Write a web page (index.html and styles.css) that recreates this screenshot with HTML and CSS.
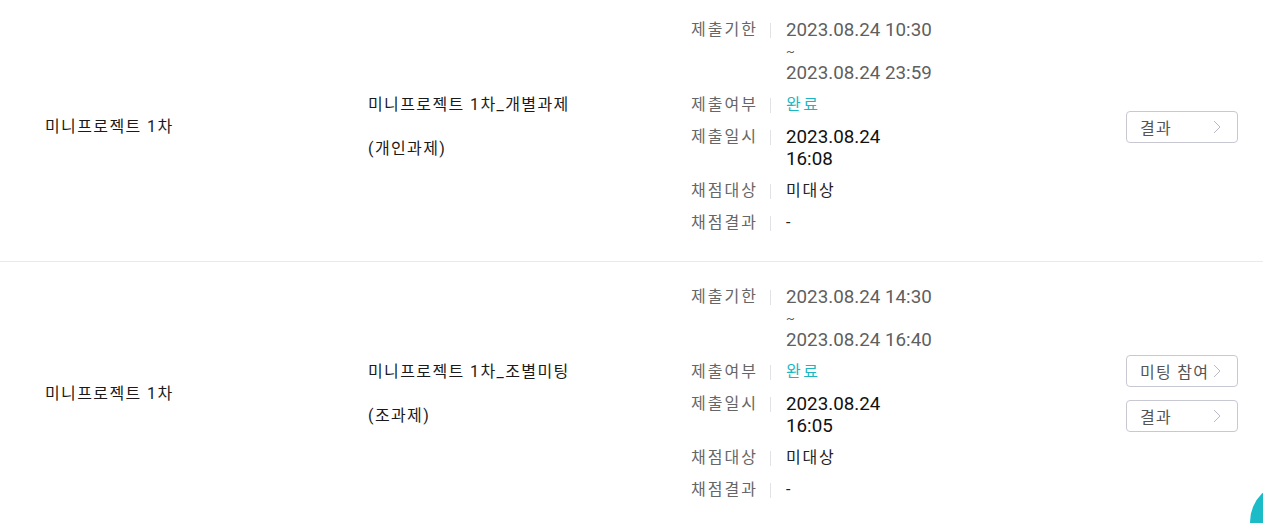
FILE: index.html
```html
<!DOCTYPE html>
<html lang="ko">
<head>
<meta charset="utf-8">
<link rel="stylesheet" href="styles.css">
</head>
<body>
<div class="list">
  <div class="row">
    <div class="c1">미니프로젝트 1차</div>
    <div class="c2">
      <p>미니프로젝트 1차_개별과제</p>
      <p>(개인과제)</p>
    </div>
    <div class="c3">
      <div class="item">
        <span class="k">제출기한</span><span class="sep"></span>
        <div class="v range"><div>2023.08.24 10:30</div><div class="tilde">~</div><div>2023.08.24 23:59</div></div>
      </div>
      <div class="item">
        <span class="k">제출여부</span><span class="sep"></span>
        <div class="v done">완료</div>
      </div>
      <div class="item">
        <span class="k">제출일시</span><span class="sep"></span>
        <div class="v date">2023.08.24<br>16:08</div>
      </div>
      <div class="item">
        <span class="k">채점대상</span><span class="sep"></span>
        <div class="v">미대상</div>
      </div>
      <div class="item">
        <span class="k">채점결과</span><span class="sep"></span>
        <div class="v">-</div>
      </div>
    </div>
    <div class="c4">
      <button class="btn"><span>결과</span><svg width="8" height="14" viewBox="0 0 8 14"><polyline points="1,1 7,7 1,13" fill="none" stroke="#b9b9c6" stroke-width="1"/></svg></button>
    </div>
  </div>
  <div class="row">
    <div class="c1">미니프로젝트 1차</div>
    <div class="c2">
      <p>미니프로젝트 1차_조별미팅</p>
      <p>(조과제)</p>
    </div>
    <div class="c3">
      <div class="item">
        <span class="k">제출기한</span><span class="sep"></span>
        <div class="v range"><div>2023.08.24 14:30</div><div class="tilde">~</div><div>2023.08.24 16:40</div></div>
      </div>
      <div class="item">
        <span class="k">제출여부</span><span class="sep"></span>
        <div class="v done">완료</div>
      </div>
      <div class="item">
        <span class="k">제출일시</span><span class="sep"></span>
        <div class="v date">2023.08.24<br>16:05</div>
      </div>
      <div class="item">
        <span class="k">채점대상</span><span class="sep"></span>
        <div class="v">미대상</div>
      </div>
      <div class="item">
        <span class="k">채점결과</span><span class="sep"></span>
        <div class="v">-</div>
      </div>
    </div>
    <div class="c4">
      <button class="btn"><span>미팅 참여</span><svg width="8" height="14" viewBox="0 0 8 14"><polyline points="1,1 7,7 1,13" fill="none" stroke="#b9b9c6" stroke-width="1"/></svg></button>
      <button class="btn"><span>결과</span><svg width="8" height="14" viewBox="0 0 8 14"><polyline points="1,1 7,7 1,13" fill="none" stroke="#b9b9c6" stroke-width="1"/></svg></button>
    </div>
  </div>
</div>
<div class="fab"></div>
</body>
</html>
```
FILE: styles.css
```css
html, body {
  margin: 0;
  padding: 0;
  background: #fff;
  overflow: hidden;
}
body {
  font-family: Roboto, "Noto Sans CJK KR", sans-serif;
  font-size: 16px;
  color: #222;
  height: 523px;
}
.list {
  margin-top: -5px;
}
.row {
  display: grid;
  grid-template-columns: 323px 323px 1fr 112px;
  padding: 24px 25px 27px 45px;
  border-bottom: 1px solid #ebe8f2;
  align-items: center;
}
.c1 {
  line-height: 22px;
  color: #1a1a1a;
  letter-spacing: 1.4px;
}
.c2 p {
  margin: 0;
  line-height: 22px;
  color: #1a1a1a;
  letter-spacing: 1.4px;
}
.c2 p + p {
  margin-top: 22px;
}
.c3 {
  display: flex;
  flex-direction: column;
  gap: 10px;
}
.item {
  display: flex;
  align-items: flex-start;
}
.k {
  width: 79px;
  line-height: 22px;
  color: #666;
  letter-spacing: 2px;
  white-space: nowrap;
}
.sep {
  width: 1px;
  height: 15px;
  margin-top: 4px;
  background: #e2e2e6;
  margin-right: 15px;
}
.v {
  line-height: 22px;
  color: #222;
  letter-spacing: 1.8px;
}
.range {
  font-size: 18.8px;
  color: #5f5f5f;
  letter-spacing: 0;
}
.range .tilde {
  font-size: 13px;
  line-height: 21px;
}
.date {
  font-size: 18.8px;
  color: #111;
  letter-spacing: 0;
}
.done {
  color: #1ab7c3;
  letter-spacing: 2.5px;
}
.c4 {
  display: flex;
  flex-direction: column;
  gap: 13px;
}
.btn {
  display: flex;
  align-items: center;
  justify-content: space-between;
  width: 112px;
  height: 32px;
  padding: 0 16px 0 13px;
  box-sizing: border-box;
  border: 1px solid #c8c8d3;
  border-radius: 4px;
  background: #fff;
  font-family: Roboto, "Noto Sans CJK KR", sans-serif;
  font-size: 16px;
  color: #555;
  letter-spacing: 1.3px;
  cursor: pointer;
}
.btn svg {
  flex: none;
}
.fab {
  position: fixed;
  width: 80px;
  height: 80px;
  border-radius: 50%;
  background: #1bbcc7;
  left: 1250px;
  top: 482px;
}
```
